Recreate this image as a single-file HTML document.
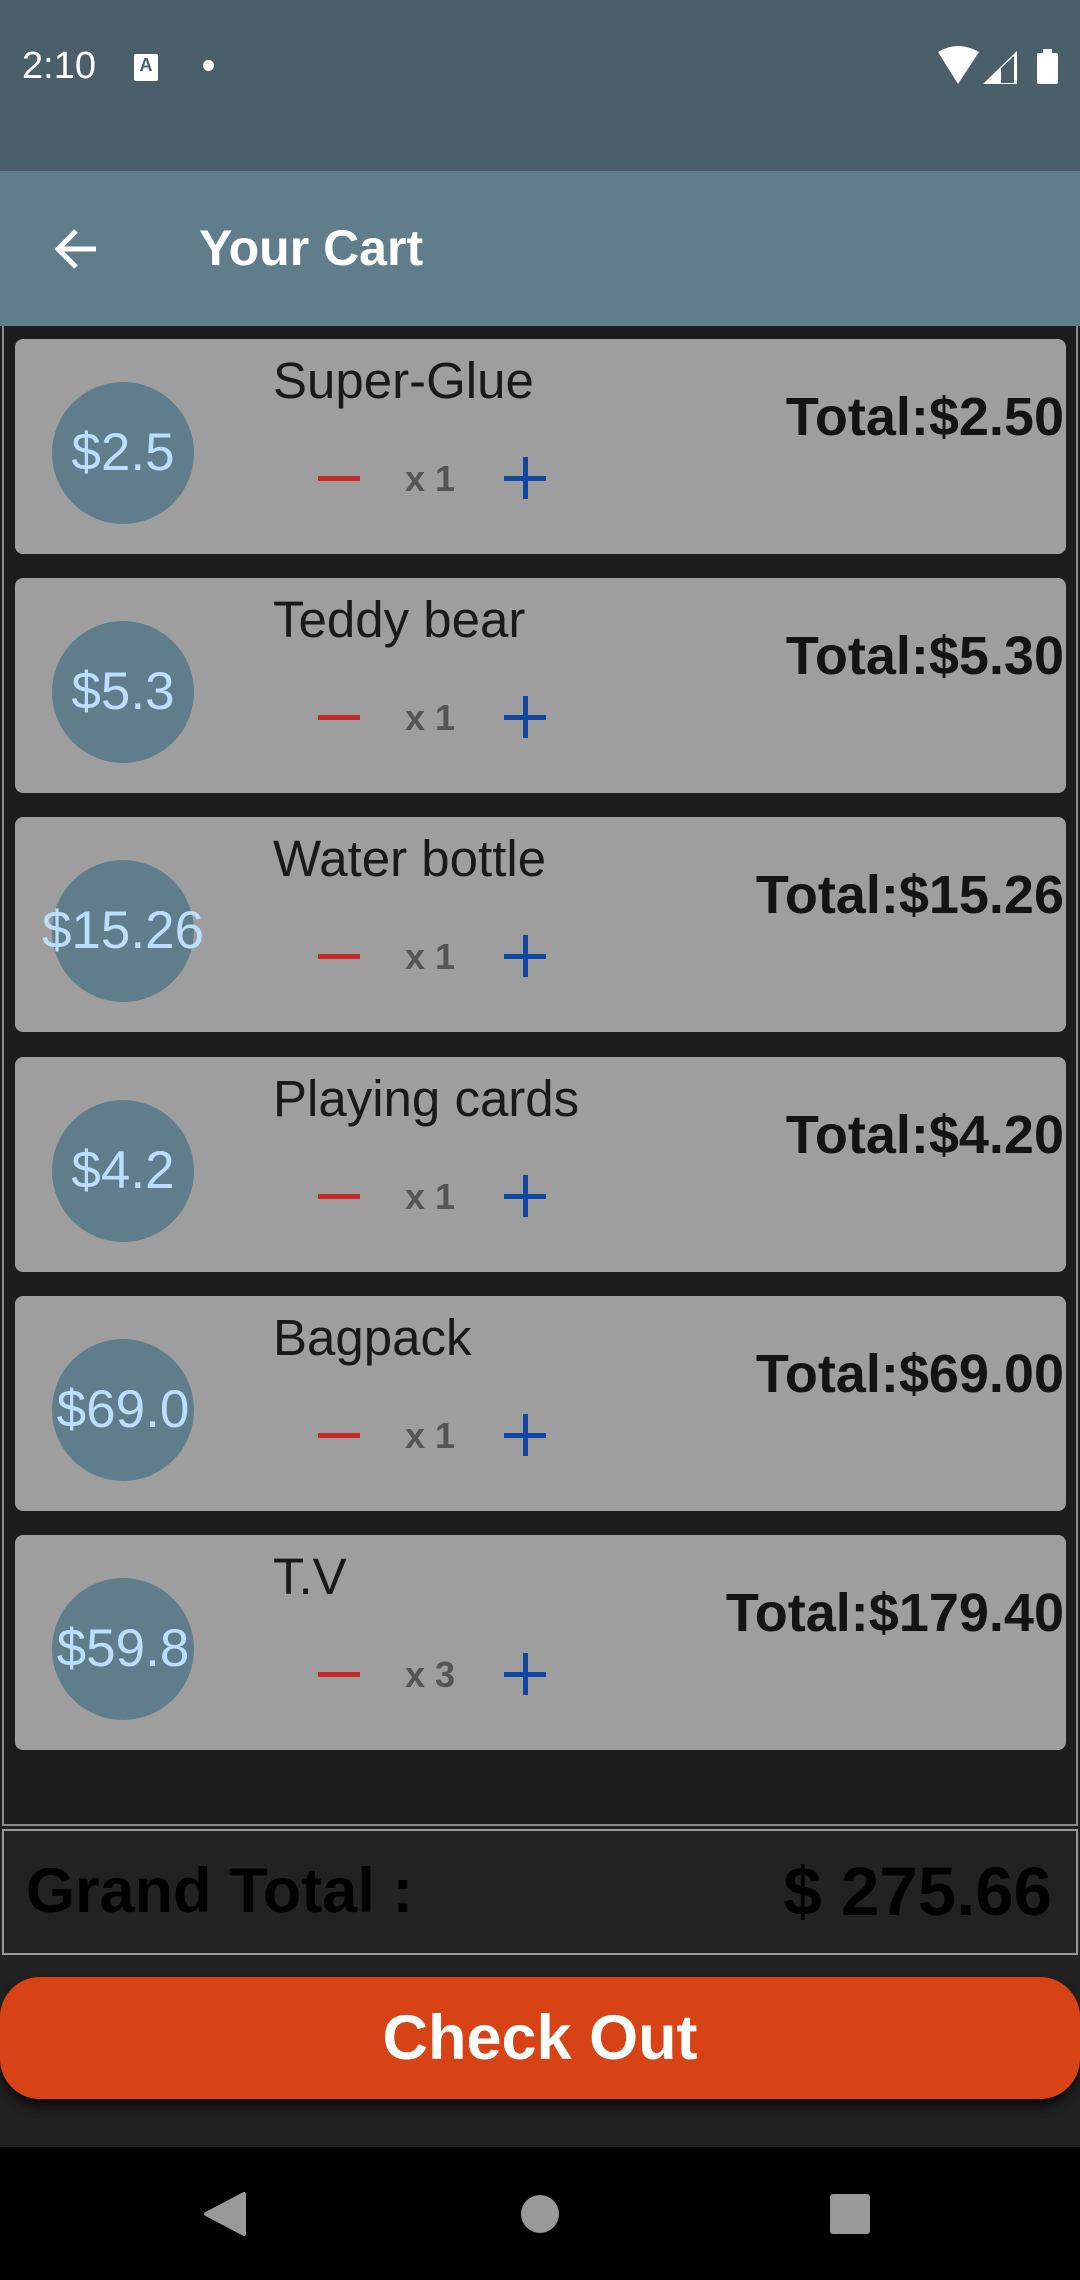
<!DOCTYPE html>
<html><head><meta charset="utf-8"><style>
*{margin:0;padding:0;box-sizing:border-box}
body{width:1080px;height:2280px;overflow:hidden;background:#1c1c1c;font-family:"Liberation Sans",sans-serif;position:relative}
.abs{position:absolute}
.status{left:0;top:0;width:1080px;height:171px;background:#4a5f6a}
.appbar{left:0;top:171px;width:1080px;height:155px;background:#607d8b}
.list{left:2px;top:326px;width:1076px;height:1500px;border:2px solid #8a8a8a;border-top:none;background:#1c1c1c}
.card{position:absolute;left:15px;width:1051px;height:215px;background:#9e9e9e;border-radius:8px}
.circ{position:absolute;left:37px;top:43px;width:142px;height:142px;border-radius:50%;background:#607d8b}
.price{position:absolute;left:8px;width:200px;top:88px;text-align:center;color:#bbdefb;font-size:53px;line-height:52px;white-space:nowrap}
.name{position:absolute;left:258px;top:12px;font-size:51px;color:#1a1a1a;white-space:nowrap}
.minus{position:absolute;left:303px;top:137px;width:42px;height:5px;background:#c62828}
.plus1{position:absolute;left:489px;top:137px;width:42px;height:5px;background:#0d47a1}
.plus2{position:absolute;left:508px;top:118px;width:5px;height:42px;background:#0d47a1}
.qty{position:absolute;left:390px;top:119px;font-size:36px;font-weight:bold;color:#555;white-space:nowrap}
.tot{position:absolute;right:2px;top:47px;font-size:54px;font-weight:bold;color:#141414;white-space:nowrap}
</style></head><body>
<div class="abs status"></div>
<div class="abs" style="left:22px;top:45px;color:#fff;font-size:38px">2:10</div>
<div class="abs" style="left:134px;top:54px;width:24px;height:27px;background:#fff;border-radius:2px;color:#4a5f6a;font-size:18px;font-weight:bold;text-align:center;line-height:22px">A</div>
<div class="abs" style="left:203px;top:60px;width:11px;height:11px;border-radius:50%;background:#fff"></div>
<svg class="abs" style="left:930px;top:45px" width="140" height="45">
<path d="M8 7 Q28 -5 49 7 L28 39 Z" fill="#fff"/>
<path d="M53 39 L87 6 L87 39 Z" fill="#fff"/><path d="M71 38 L71 23 L84 11 L84 38 Z" fill="#4a5f6a"/>
<rect x="107" y="8" width="21" height="31" rx="2" fill="#fff"/><rect x="113" y="4" width="9" height="5" fill="#fff"/>
</svg>
<div class="abs appbar"></div>
<svg class="abs" style="left:52px;top:226px" width="50" height="46"><path d="M44 23 H6 M24 5 L6 23 L24 41" stroke="#fff" stroke-width="5" fill="none"/></svg>
<div class="abs" style="left:199px;top:219px;color:#fff;font-size:50px;font-weight:bold">Your Cart</div>
<div class="abs list"></div>

<div class="card" style="top:339px"><div class="circ"></div><div class="price">$2.5</div><div class="name">Super-Glue</div><div class="minus"></div><div class="qty">x 1</div><div class="plus1"></div><div class="plus2"></div><div class="tot">Total:$2.50</div></div>
<div class="card" style="top:578px"><div class="circ"></div><div class="price">$5.3</div><div class="name">Teddy bear</div><div class="minus"></div><div class="qty">x 1</div><div class="plus1"></div><div class="plus2"></div><div class="tot">Total:$5.30</div></div>
<div class="card" style="top:817px"><div class="circ"></div><div class="price">$15.26</div><div class="name">Water bottle</div><div class="minus"></div><div class="qty">x 1</div><div class="plus1"></div><div class="plus2"></div><div class="tot">Total:$15.26</div></div>
<div class="card" style="top:1057px"><div class="circ"></div><div class="price">$4.2</div><div class="name">Playing cards</div><div class="minus"></div><div class="qty">x 1</div><div class="plus1"></div><div class="plus2"></div><div class="tot">Total:$4.20</div></div>
<div class="card" style="top:1296px"><div class="circ"></div><div class="price">$69.0</div><div class="name">Bagpack</div><div class="minus"></div><div class="qty">x 1</div><div class="plus1"></div><div class="plus2"></div><div class="tot">Total:$69.00</div></div>
<div class="card" style="top:1535px"><div class="circ"></div><div class="price">$59.8</div><div class="name">T.V</div><div class="minus"></div><div class="qty">x 3</div><div class="plus1"></div><div class="plus2"></div><div class="tot">Total:$179.40</div></div>

<div class="abs" style="left:0;top:1826px;width:1080px;height:321px;background:#212121"></div>
<div class="abs" style="left:2px;top:1829px;width:1076px;height:126px;border:2px solid #999;background:#222"></div>
<div class="abs" style="left:26px;top:1855px;font-size:63px;font-weight:bold;color:#000">Grand Total :</div>
<div class="abs" style="right:28px;top:1852px;font-size:69px;font-weight:bold;color:#000">$ 275.66</div>
<div class="abs" style="left:0;top:1977px;width:1080px;height:122px;border-radius:40px;background:#d84315;box-shadow:0 8px 10px rgba(0,0,0,.6);color:#fff;font-size:63px;font-weight:bold;text-align:center;line-height:122px">Check Out</div>
<div class="abs" style="left:0;top:2147px;width:1080px;height:133px;background:#000"></div>
<svg class="abs" style="left:0;top:2180px" width="1080" height="70">
<path d="M244 14 L244 54 L206 34 Z" fill="#999" stroke="#999" stroke-width="4" stroke-linejoin="round"/>
<ellipse cx="540" cy="34" rx="19" ry="19" fill="#999"/>
<rect x="830" y="14" width="40" height="40" rx="3" fill="#999"/>
</svg>
</body></html>
